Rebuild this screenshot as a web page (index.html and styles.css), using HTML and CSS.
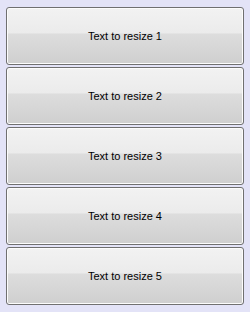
FILE: index.html
```html
<!DOCTYPE html>
<html>
<head>
<meta charset="utf-8">
<link rel="stylesheet" href="styles.css">
</head>
<body>
<div class="panel">
  <button class="btn">Text to resize 1</button>
  <button class="btn">Text to resize 2</button>
  <button class="btn">Text to resize 3</button>
  <button class="btn">Text to resize 4</button>
  <button class="btn">Text to resize 5</button>
</div>
</body>
</html>
```

FILE: styles.css
```css
html, body {
  margin: 0;
  padding: 0;
  background: #e3e3f7;
}
.panel {
  width: 250px;
  height: 312px;
  box-sizing: border-box;
  padding: 7px 6px 8px 6px;
  display: flex;
  flex-direction: column;
  gap: 2px;
}
.btn {
  height: 58px;
  flex: none;
  box-sizing: border-box;
  border: 1px solid #707070;
  border-radius: 3px;
  box-shadow: inset 0 0 0 1px #fcfcfc;
  background: linear-gradient(to bottom, #f2f2f2 0%, #ebebeb 45%, #dddddd 46%, #cfcfcf 100%);
  font-family: "Liberation Sans", Arial, sans-serif;
  font-size: 11px;
  color: #000;
  padding: 0;
  margin: 0;
}
```
